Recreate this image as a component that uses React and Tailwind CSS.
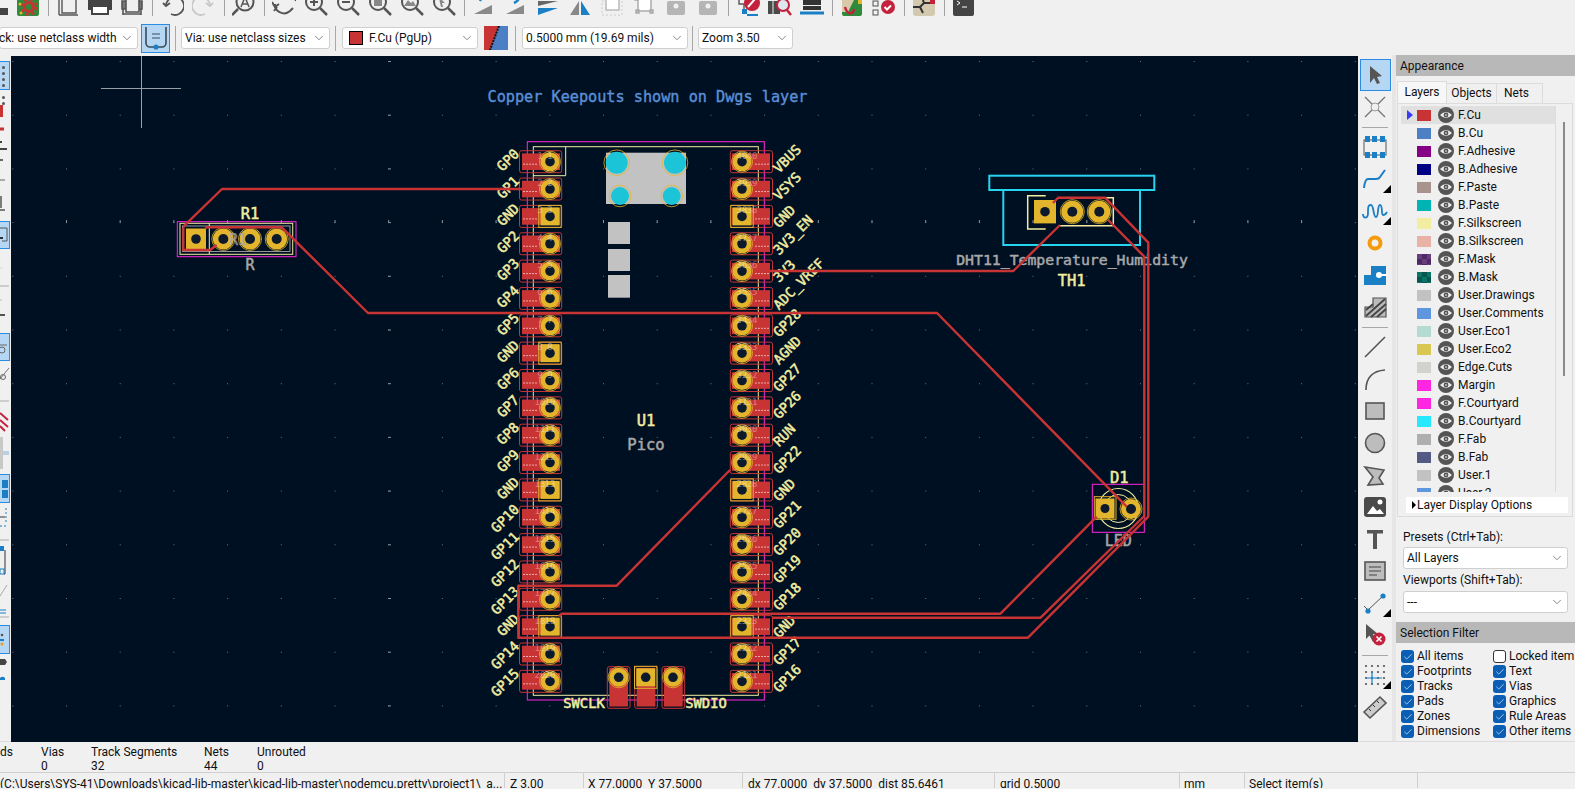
import React from 'react';
import { ChevronDown, Check } from 'lucide-react';

const RED = '#c83434';
const GOLD = '#e2b52c';
const SILK = '#f2eda1';
const COURT = '#ff26e2';
const GREY = '#a8a8a8';
const DARK = '#555555';
const BLUE = '#1a7fc4';

const rows = Array.from({ length: 20 }, (_, i) => 161.7 + i * 27.35);
const gridX = Array.from({ length: 24 }, (_, i) => 66 + i * 53.7);
const gridY = Array.from({ length: 13 }, (_, i) => 61 + i * 53.7);
const leftPins = ['GP0', 'GP1', 'GND', 'GP2', 'GP3', 'GP4', 'GP5', 'GND', 'GP6', 'GP7', 'GP8', 'GP9', 'GND', 'GP10', 'GP11', 'GP12', 'GP13', 'GND', 'GP14', 'GP15'];
const rightPins = ['VBUS', 'VSYS', 'GND', '3V3_EN', '3V3', 'ADC_VREF', 'GP28', 'AGND', 'GP27', 'GP26', 'RUN', 'GP22', 'GND', 'GP21', 'GP20', 'GP19', 'GP18', 'GND', 'GP17', 'GP16'];

const layers = [
    { name: 'F.Cu', cls: 'bg-[#c83434]' },
    { name: 'B.Cu', cls: 'bg-[#4d7fc4]' },
    { name: 'F.Adhesive', cls: 'bg-[#840084]' },
    { name: 'B.Adhesive', cls: 'bg-[#000084]' },
    { name: 'F.Paste', cls: 'bg-[#a9948d]' },
    { name: 'B.Paste', cls: 'bg-[#00b4b4]' },
    { name: 'F.Silkscreen', cls: 'bg-[#f2eda1]' },
    { name: 'B.Silkscreen', cls: 'bg-[#e8b2a7]' },
    { name: 'F.Mask', cls: 'bg-[conic-gradient(#4c2a63_25%,#6a3c7f_0_50%,#4c2a63_0_75%,#6a3c7f_0)] bg-[length:10px_10px]' },
    { name: 'B.Mask', cls: 'bg-[conic-gradient(#07574e_25%,#0b7466_0_50%,#07574e_0_75%,#0b7466_0)] bg-[length:10px_10px]' },
    { name: 'User.Drawings', cls: 'bg-[#c2c2c2]' },
    { name: 'User.Comments', cls: 'bg-[#5e97e0]' },
    { name: 'User.Eco1', cls: 'bg-[#b4dbd2]' },
    { name: 'User.Eco2', cls: 'bg-[#d8c852]' },
    { name: 'Edge.Cuts', cls: 'bg-[#d0d2cd]' },
    { name: 'Margin', cls: 'bg-[#ff26e2]' },
    { name: 'F.Courtyard', cls: 'bg-[#ff26e2]' },
    { name: 'B.Courtyard', cls: 'bg-[#26e9ff]' },
    { name: 'F.Fab', cls: 'bg-[#afafaf]' },
    { name: 'B.Fab', cls: 'bg-[#535b85]' },
    { name: 'User.1', cls: 'bg-[#c2c2c2]' },
    { name: 'User.2', cls: 'bg-[#5e97e0]' },
];

const filters = [
    ['All items', true, 'Locked items', false],
    ['Footprints', true, 'Text', true],
    ['Tracks', true, 'Vias', true],
    ['Pads', true, 'Graphics', true],
    ['Zones', true, 'Rule Areas', true],
    ['Dimensions', true, 'Other items', true],
];

// --- top toolbar ---

const Glass = ({ children }) => (
    <>
        <circle cx="10" cy="9" r="8" fill="none" stroke={DARK} strokeWidth="2" />
        <path d="M16 15l7 7" stroke={DARK} strokeWidth="2.5" />
        {children}
    </>
);

const topIcons = [
    <rect key="a" x="16" y="15" width="8" height="7" fill="#444" />,
    <g key="b"><rect x="1" y="1" width="22" height="22" rx="2" fill="#2f8a3b" /><circle cx="13" cy="14" r="4.5" fill="none" stroke={RED} strokeWidth="3" /><circle cx="13" cy="14" r="7.5" fill="none" stroke={RED} strokeWidth="2.5" strokeDasharray="3 3" /><circle cx="4" cy="11" r="1.5" fill={GOLD} /><circle cx="5" cy="20" r="1.5" fill={GOLD} /></g>,
    null,
    <g key="c" fill="none" stroke={DARK} strokeWidth="1.4"><path d="M6 2h14v18H6z" /><path d="M3 2v20M3 22h19" /></g>,
    <g key="d"><path d="M0 7h24v10h-4v-4H4v4H0z" fill="#444" /><path d="M4 13h16v8H4z" fill="#fff" stroke="#444" strokeWidth="2" /></g>,
    <g key="e" fill="none" stroke={DARK} strokeWidth="1.6"><path d="M2 8h20v8H2z" fill="#777" /><path d="M6 5h13v14H6z" fill="#f0f0f0" /><path d="M3 16v6M21 16v6M3 21h18" /></g>,
    null,
    <g key="f" fill="none" stroke={DARK} strokeWidth="1.8"><path d="M3 10l3 3 4-3" /><path d="M6 13a9 9 0 1 1 5 8" /></g>,
    <g key="g" fill="none" stroke="#c8c8c8" strokeWidth="1.8"><path d="M21 10l-3 3-4-3" /><path d="M18 13a9 9 0 1 0-5 8" /></g>,
    null,
    <g key="h" fill="none" stroke={DARK} strokeWidth="2"><circle cx="13" cy="9" r="8.5" /><path d="M6 16l-6 6" strokeWidth="2.5" /><path d="M9 14l4-10 4 10M10.5 11h5" strokeWidth="1.5" /></g>,
    null,
    <g key="i" fill="none" stroke={DARK} strokeWidth="2"><path d="M3 11a9 9 0 0 0 15 7l3-3" /><path d="M0 9l3 5 4-3M24 8a9 9 0 0 0-8-6" /><path d="M2 18l3-4" /></g>,
    <Glass key="j"><path d="M6 9h8M10 5v8" stroke={DARK} strokeWidth="2" /></Glass>,
    <Glass key="k"><path d="M6 9h8" stroke={DARK} strokeWidth="2" /></Glass>,
    <Glass key="l"><rect x="6" y="5" width="8" height="8" fill="#888" /></Glass>,
    <Glass key="m"><path d="M4 13l4-6 3 3 2-2 3 5z" fill="#888" /></Glass>,
    <Glass key="n"><path d="M7 4l6 6-3 0 1 4-2 0-1-4z" fill="#888" /></Glass>,
    null,
    <g key="o"><path d="M2 21l18-9v9z" fill="#8a8a8a" /><path d="M8 8a12 12 0 0 1 7-7" stroke={BLUE} strokeWidth="2.5" fill="none" /></g>,
    <g key="p"><path d="M2 21l18-9v9z" fill="#8a8a8a" /><path d="M10 10a10 10 0 0 0 6-8" stroke={BLUE} strokeWidth="2.5" fill="none" /></g>,
    <g key="q"><path d="M2 8h20L2 13z" fill="#666" /><path d="M2 15h20L2 22z" fill={BLUE} /></g>,
    <g key="r"><path d="M11 8v14H2z" fill="#888" /><path d="M13 8v14h9z" fill={BLUE} /></g>,
    <g key="s" fill="none"><rect x="2" y="8" width="20" height="14" stroke="#ccc" strokeDasharray="2 2" /><rect x="6" y="6" width="13" height="11" fill="#fff" stroke="#bbb" strokeWidth="1.5" /></g>,
    <g key="t" fill="none" stroke="#aaa" strokeWidth="1.5"><rect x="6" y="6" width="13" height="12" fill="#fff" /><rect x="3" y="4" width="3" height="3" fill="#bbb" /><rect x="18" y="17" width="3" height="3" fill="#bbb" /><rect x="4" y="17" width="3" height="3" fill="#bbb" /></g>,
    <g key="u"><rect x="3" y="8" width="18" height="14" rx="2" fill="#b5b5b5" /><circle cx="12" cy="13" r="2.5" fill="#f0f0f0" /></g>,
    <g key="v"><rect x="3" y="8" width="18" height="14" rx="2" fill="#b5b5b5" /><circle cx="12" cy="13" r="2.5" fill="#f0f0f0" /></g>,
    null,
    <g key="w"><path d="M3 5v6h5v5" fill="none" stroke={DARK} strokeWidth="1.4" /><rect x="6" y="16" width="5" height="5" fill={BLUE} /><path d="M11 22h11" stroke={BLUE} strokeWidth="2" /><circle cx="16" cy="10" r="8" fill="#c4213c" /><path d="M12 14l7-8" stroke="#fff" strokeWidth="2" /></g>,
    <g key="x"><rect x="0" y="8" width="12" height="13" fill="#4a4a4a" /><path d="M5 8v13" stroke="#eee" /><circle cx="15" cy="12" r="6" fill="#dfe7ee" stroke="#c4213c" strokeWidth="2" /><path d="M19 17l4 5" stroke="#c4213c" strokeWidth="2.5" /></g>,
    <g key="y"><path d="M3 7h18v5H3zM3 13h18v4H3z" fill="#333" /><path d="M0 20h24" stroke={BLUE} strokeWidth="3" /></g>,
    null,
    <g key="z"><rect x="2" y="7" width="20" height="16" rx="2" fill="#2f8a3b" /><path d="M2 7h12L8 19H2z" fill="#d8c9a8" /><path d="M5 14c2 8 8 8 9 2" fill="none" stroke="#c4213c" strokeWidth="2.4" /><rect x="18" y="7" width="4" height="4" fill={GOLD} /></g>,
    <g key="aa"><rect x="1" y="8" width="5" height="5" fill="none" stroke={DARK} /><rect x="1" y="17" width="5" height="5" fill="none" stroke={DARK} /><circle cx="16" cy="14" r="7" fill="#c4213c" /><path d="M12.5 14l2.5 2.5 4-4" fill="none" stroke="#fff" strokeWidth="2" /></g>,
    null,
    <g key="ab"><rect x="1" y="0" width="22" height="23" rx="3" fill="#d3c9ae" /><path d="M1 14h7l4-4 7 0M8 14l3 6M12 10l-2-6" stroke="#333" strokeWidth="2" fill="none" /><rect x="18" y="6" width="5" height="5" fill="#c4213c" /></g>,
    null,
    <g key="ac"><rect x="1" y="1" width="21" height="22" rx="2" fill="#444" /><path d="M5 8l3 2-3 2" stroke="#fff" fill="none" /><path d="M10 14h5" stroke="#fff" /></g>,
];

const TopBar = () => (
    <div className="flex items-start h-[23px] overflow-hidden -ml-[20px]">
        {topIcons.map((icon, i) => icon === null ? (
            <div key={i} className="w-[8px] h-[16px] flex justify-center shrink-0"><div className="w-px h-full bg-[#a0a0a0]" /></div>
        ) : (
            <div key={i} className="w-[32px] flex justify-center shrink-0">
                <svg width="24" height="24" viewBox="0 0 24 24" className="-mt-[7px]">{icon}</svg>
            </div>
        ))}
    </div>
);

const Sel = ({ className, children, textClass = '' }) => (
    <div className={`h-[22px] bg-white border border-[#cfcfcf] rounded-[3px] flex items-center justify-between shrink-0 ${className}`}>
        <div className={`flex items-center whitespace-nowrap ${textClass}`}>{children}</div>
        <ChevronDown size={14} strokeWidth={1} className="text-[#333] mr-[3px] shrink-0" />
    </div>
);

const VSep = ({ className }) => <div className={`w-px h-[25px] bg-[#a8a8a8] shrink-0 ${className}`} />;

const SecondBar = () => (
    <div className="flex items-center h-[30px] mb-[2px] shrink-0">
        <Sel className="w-[139px] -ml-px">
            <span className="-ml-[1px]">ck: use netclass width</span>
        </Sel>
        <div className="ml-[3px] w-[29px] h-[29px] bg-[#b5d7f3] border border-[#2a8be0] flex items-center justify-center shrink-0">
            <svg width="24" height="26" viewBox="0 0 24 26"><path d="M2 2v16a4 4 0 0 0 4 4h12a4 4 0 0 0 4-4V2" fill="none" stroke="#3a4a55" strokeWidth="1.6" /><path d="M8 9h8M8 13h8" stroke="#3a4a55" /><circle cx="12" cy="22" r="2.6" fill={BLUE} /></svg>
        </div>
        <VSep className="ml-[5px]" />
        <Sel className="w-[149px] ml-[5px]" textClass="pl-[3px]">Via: use netclass sizes</Sel>
        <VSep className="ml-[5px]" />
        <Sel className="w-[136px] ml-[6px]" textClass="pl-[6px]">
            <span className="w-[14px] h-[14px] bg-[#c83434] border border-black mr-[6px]" />F.Cu (PgUp)
        </Sel>
        <svg width="24" height="24" viewBox="0 0 24 24" className="ml-[6px] shrink-0"><path d="M0 0h15L6 24H0z" fill={RED} /><path d="M15 0h9v24H6z" fill="#4d7fc4" /><path d="M15 0L6 24" stroke="#111" strokeWidth="2" strokeDasharray="2 1" /></svg>
        <VSep className="ml-[7px]" />
        <Sel className="w-[166px] ml-[6px]" textClass="pl-[3px]">0.5000 mm (19.69 mils)</Sel>
        <VSep className="ml-[4px]" />
        <Sel className="w-[95px] ml-[5px]" textClass="pl-[3px]">Zoom 3.50</Sel>
    </div>
);

// --- left strip, only the right edge of the toolbar is on screen ---

const Dots = ({ n = 4 }) => (
    <div className="flex flex-col items-center gap-[3px] w-[6px] pt-[2px]">
        {Array.from({ length: n }).map((_, i) => <div key={i} className="w-[3px] h-[3px] rounded-full bg-[#555]" />)}
    </div>
);

const hl = 'bg-[#b5d7f3] border border-l-0 border-[#2a8be0] flex items-center';

const LeftStrip = () => (
    <div className="w-[11px] shrink-0 flex flex-col pt-[6px] overflow-hidden">
        <div className={`h-[29px] w-[10px] ${hl}`}><Dots /></div>
        <div className="h-[30px] pt-[4px]"><Dots n={2} /><div className="w-[3px] h-[12px] bg-[#c83434]" /></div>
        <svg width="10" height="32" viewBox="0 0 10 32" className="shrink-0"><path d="M0 9h4" stroke={RED} strokeWidth="3" /><path d="M0 22h2M0 29h7" stroke="#444" strokeWidth="2" /></svg>
        <svg width="10" height="69" viewBox="0 0 10 69" className="shrink-0"><path d="M0 8h3" stroke="#666" strokeWidth="2" /><path d="M0 28h5" stroke="#666" /><path d="M1 44v12M0 58h5" stroke="#555" strokeWidth="1.5" /></svg>
        <div className={`h-[28px] w-[10px] ${hl}`}><svg width="8" height="20" viewBox="0 0 8 20"><path d="M0 3h7v13H2" fill="none" stroke="#555" /><path d="M0 13h3" stroke="#333" strokeWidth="2" /></svg></div>
        <svg width="10" height="84" viewBox="0 0 10 84" className="shrink-0"><path d="M0 19h3" stroke="#ddd" /><path d="M0 37h9" stroke="#aaa" /><path d="M0 51h2" stroke="#bbb" /><path d="M0 66h5" stroke="#555" strokeWidth="2" /></svg>
        <div className={`h-[28px] w-[10px] ${hl}`}><svg width="8" height="20" viewBox="0 0 8 20"><path d="M0 8h7" stroke="#666" /><circle cx="2" cy="13" r="3" fill="none" stroke="#666" /></svg></div>
        <svg width="10" height="38" viewBox="0 0 10 38" className="shrink-0"><path d="M0 18L9 7" stroke="#777" /><circle cx="3" cy="16" r="2.5" fill="none" stroke="#666" /></svg>
        <svg width="10" height="10" viewBox="0 0 10 10" className="shrink-0"><path d="M0 2h9" stroke="#aaa" /></svg>
        <svg width="10" height="24" viewBox="0 0 10 24" className="shrink-0"><path d="M0 4l8 7M0 11l8 7M0 17l5 5" stroke="#c4213c" strokeWidth="2" fill="none" /></svg>
        <svg width="10" height="41" viewBox="0 0 10 41" className="shrink-0"><path d="M0 4h3v32H0z" fill="#c8c8c8" /><path d="M3 18h6v4H3z" fill="#b9cfe3" /></svg>
        <div className={`h-[29px] w-[10px] ${hl} flex-col justify-center gap-[2px]`}><div className="w-[6px] h-[8px] bg-[#1a7fc4]" /><div className="w-[6px] h-[8px] bg-[#1a7fc4]" /></div>
        <svg width="10" height="35" viewBox="0 0 10 35" className="shrink-0"><path d="M6 5v16" stroke={BLUE} strokeDasharray="2 2" /><path d="M0 14h5" stroke="#333" /><path d="M0 23h6" stroke={BLUE} strokeDasharray="2 2" /></svg>
        <svg width="10" height="78" viewBox="0 0 10 78" className="shrink-0"><path d="M0 2h9" stroke="#aaa" /><path d="M0 12h3M5 12v24h-1" stroke="#333" fill="none" /><rect x="0" y="8" width="4" height="5" fill={BLUE} /><rect x="0" y="31" width="4" height="5" fill="none" stroke={BLUE} /><path d="M0 58L7 47" stroke="#aaa" /><path d="M0 72h6M0 75h6" stroke={BLUE} /></svg>
        <svg width="10" height="9" viewBox="0 0 10 9" className="shrink-0"><path d="M0 1h9" stroke="#aaa" /></svg>
        <div className={`h-[29px] w-[10px] ${hl}`}><svg width="6" height="14" viewBox="0 0 6 14"><circle cx="2" cy="2" r="1.3" fill="#555" /><path d="M0 7h4" stroke={BLUE} strokeWidth="2" /><circle cx="2" cy="11" r="1.5" fill="#ef9a10" /></svg></div>
        <svg width="10" height="30" viewBox="0 0 10 30" className="shrink-0"><path d="M0 5h5l2 3-2 3H0z" fill="#444" /><path d="M0 24a3 3 0 0 1 5 0v2H0z" fill={BLUE} /></svg>
    </div>
);

// --- board ---

const T = ({ x, y, s = 14, c = SILK, sw = 0.5, rot, a = 'middle', children, o }) => (
    <text x={x} y={y} fontSize={s} fill={c} stroke={c} strokeWidth={sw} textAnchor={a} opacity={o}
        transform={rot ? `rotate(${rot} ${x} ${y})` : undefined}>{children}</text>
);

const Via = ({ x, y, r = 9.5, hole = 4.8 }) => (
    <g>
        <circle cx={x} cy={y} r={r + 1} fill="none" stroke={GOLD} strokeWidth="0.8" />
        <circle cx={x} cy={y} r={r} fill={GOLD} />
        <circle cx={x} cy={y} r={hole} fill="#0c1a2c" />
    </g>
);

const Square = ({ x, y, w = 10.5, h = 9, hole = 4.8, box = true }) => (
    <g>
        {box && <rect x={x - w - 0.7} y={y - h - 2} width={2 * w + 1.4} height={2 * h + 4} fill="none" stroke={GOLD} strokeWidth="1" />}
        <rect x={x - w + 1} y={y - h} width={2 * w - 2} height={2 * h} fill={GOLD} />
        <circle cx={x} cy={y} r={hole} fill="#0c1a2c" />
    </g>
);

const Pin = ({ y, side, num, gnd }) => {
    const left = side === 'L';
    const mx = (v) => (left ? v : 1292 - v);
    const pad = left ? 522 : 732;
    const box = left ? 519.5 : 730.3;
    return (
        <g>
            <rect x={pad} y={y - 8.3} width={38} height={16.6} fill={RED} />
            <rect x={box} y={y - 11} width={42.2} height={22} rx={2} fill="none" stroke={RED} strokeWidth="1" />
            <path d={`M${mx(523)} ${y + 2.5}H${mx(537)}`} stroke="#f5c8c8" strokeWidth="1" strokeDasharray="2 1" opacity="0.8" />
            {gnd ? <Square x={mx(550)} y={y} /> : <Via x={mx(550)} y={y} />}
            <T x={mx(550)} y={y - 3} s={9} c="#ffffff" sw={0} o={0.45}>{num}</T>
            <T x={mx(540)} y={y - 3} s={9} c="#ffffff" sw={0} o={0.35}>{num}</T>
        </g>
    );
};

const Board = () => (
    <svg viewBox="11 56 1347 686" width="1347" height="686" className="block font-['DejaVu_Sans_Mono',monospace]">
        <defs>
            <pattern id="grid" x="66" y="61" width="53.7" height="53.7" patternUnits="userSpaceOnUse">
                <rect width="1" height="1" fill="#6a7480" />
            </pattern>
        </defs>
        <rect x="11" y="56" width="1347" height="686" fill="#001023" />
        <rect x="11" y="56" width="1347" height="686" fill="url(#grid)" />
        {gridY.map((y) => <path key={y} d={`M388 ${y + 0.5}h3`} stroke="#8a929c" />)}
        {gridX.map((x) => <path key={x} d={`M${x + 0.5} 220v3`} stroke="#8a929c" />)}

        <path d="M141.5 56v72M101 88.5h80" stroke="#9a9fa5" strokeWidth="1" fill="none" />
        <T x={647.5} y={102} s={15.2} c="#5b8fd6" sw={0.4}>Copper Keepouts shown on Dwgs layer</T>

        {/* pico module */}
        <rect x="527.3" y="141.7" width="237" height="558.3" fill="none" stroke={COURT} strokeWidth="1" />
        <rect x="533.3" y="146.7" width="225" height="548.6" fill="none" stroke={SILK} strokeWidth="1" />
        <path d="M533 175.7h32.7v-29" fill="none" stroke={SILK} strokeWidth="1" />
        <rect x="606" y="152.7" width="80" height="51.3" fill="#c2c2c2" />
        {[[616.7, 162.7, 11], [675, 162.7, 11], [620, 196, 9], [671.7, 196, 9]].map(([x, y, r], i) => (
            <g key={i}>
                <circle cx={x} cy={y} r={r} fill="#1cc4d8" />
                <circle cx={x} cy={y} r={r + 1.8} fill="none" stroke={GOLD} strokeWidth="0.8" />
            </g>
        ))}
        <rect x="608" y="222" width="22" height="22" fill="#c2c2c2" />
        <rect x="608" y="249" width="22" height="22" fill="#c2c2c2" />
        <rect x="608" y="275" width="22" height="22.7" fill="#c2c2c2" />

        {rows.map((y, i) => <Pin key={i} y={y} side="L" num={i + 1} gnd={leftPins[i] === 'GND'} />)}
        {rows.map((y, i) => <Pin key={i} y={y} side="R" num={40 - i} gnd={rightPins[i] === 'GND'} />)}
        {rows.map((y, i) => <T key={i} x={520} y={y - 7} s={13.6} a="end" rot={-45}>{leftPins[i]}</T>)}
        {rows.map((y, i) => <T key={i} x={779} y={y + 12} s={13.6} a="start" rot={-45}>{rightPins[i]}</T>)}

        {/* debug pads */}
        {[609.3, 636.7, 664].map((x, i) => (
            <g key={i}>
                <rect x={x} y="668" width="18.7" height="38.5" fill={RED} />
                <rect x={x - 2} y="666.7" width="22.7" height="41.6" rx="2" fill="none" stroke={RED} />
            </g>
        ))}
        <Via x={618.7} y={677.3} />
        <Square x={645.7} y={677.3} box={true} />
        <Via x={673} y={677.3} />
        <T x={584} y={708} s={13.8}>SWCLK</T>
        <T x={706} y={708} s={13.8}>SWDIO</T>
        <T x={646} y={426} s={15.5}>U1</T>
        <T x={646} y={450} s={15.5} c={GREY}>Pico</T>

        {/* R1 */}
        <rect x="177.3" y="221.7" width="118.7" height="35" fill="none" stroke={COURT} />
        <rect x="180" y="223.3" width="112.7" height="31" fill="none" stroke={SILK} />
        <rect x="182.5" y="226" width="107.5" height="25.5" fill="none" stroke="#b8b8b8" strokeWidth="0.8" />
        <path d="M209.3 223v31" stroke={SILK} />
        <Square x={196} y={239} w={11} h={10.5} box={false} />
        <Via x={223.3} y={239} r={10.5} hole={5} />
        <Via x={250} y={239} r={10.5} hole={5} />
        <Via x={276.7} y={239} r={10.5} hole={5} />
        <T x={238} y={245} s={15} c={GREY} o={0.8}>R1</T>
        <T x={250} y={218.5} s={15.5}>R1</T>
        <T x={250} y={270} s={15} c={GREY}>R</T>

        {/* DHT11 */}
        <rect x="989.3" y="175.7" width="165" height="14.3" fill="none" stroke="#26d4f0" strokeWidth="2" />
        <path d="M1003.3 190v55h136.7v-55" fill="none" stroke="#26d4f0" strokeWidth="2" />
        <path d="M1045.7 195.7h-18v33.3h18M1060 225.7h53.3v-28h-8" fill="none" stroke={SILK} strokeWidth="1.5" />
        <Square x={1045} y={211.7} w={12} h={11.7} box={false} />
        <Via x={1072.3} y={211.7} r={11} hole={5} />
        <Via x={1099.3} y={211.7} r={11} hole={5} />
        <T x={1072} y={265} s={14.8} c={GREY}>DHT11_Temperature_Humidity</T>
        <T x={1071.7} y={285.5} s={15.5}>TH1</T>

        {/* D1 */}
        <rect x="1092.3" y="484.3" width="52" height="48" fill="none" stroke={COURT} />
        <circle cx="1118.3" cy="508.5" r="20" fill="none" stroke={SILK} strokeWidth="1.2" />
        <circle cx="1118.3" cy="508.5" r="14" fill="none" stroke={SILK} strokeWidth="1" />
        <rect x="1094.3" y="496.7" width="21.7" height="22.6" fill="none" stroke={GOLD} />
        <Square x={1105} y={508.5} w={10.5} h={10} hole={4.5} box={false} />
        <Via x={1131} y={509} r={10} hole={5} />
        <T x={1119.3} y={482.5} s={15.5}>D1</T>
        <T x={1118.3} y={545.5} s={15} c={GREY}>LED</T>

        {/* tracks */}
        <g fill="none" stroke={RED} strokeWidth="2.4" strokeLinejoin="round">
            <path d="M183.3 226.7L222 189H522" />
            <path d="M183.3 226.7V250H210L216.7 245" />
            <path d="M205 228L207 227.3H281.7L368 313H937L1126.7 506.7" />
            <path d="M730 470L616.7 585.7H518.3V637.7H1028L1148.3 516.7V242.7L1105 197.7H1058.3L1053 203" />
            <path d="M559 616L561.7 613.7H1000.5L1096.7 516.7" />
            <path d="M772 617.7H1040.6L1144.3 516V256.7L1108.3 220" />
            <path d="M770 271H1013.3L1060 225" />
        </g>
    </svg>
);

// --- right toolbar ---

const Tool = ({ active, tri, children }) => (
    <div className={`relative w-[31px] h-[32px] flex items-center justify-center ${active ? 'bg-[#b5d7f3] border border-[#2a8be0] h-[31px]' : ''}`}>
        <svg width="26" height="26" viewBox="0 0 26 26">{children}</svg>
        {tri && <div className="absolute right-0 bottom-[2px] w-0 h-0 border-l-[8px] border-l-transparent border-b-[8px] border-b-black" />}
    </div>
);

const ToolSep = () => <div className="h-[8px] flex items-center justify-center"><div className="w-[26px] h-px bg-[#a8a8a8]" /></div>;

const RightTools = () => (
    <div className="w-[34px] shrink-0 flex flex-col items-center pt-[4px]">
        <Tool active><path d="M8 4l0 17 4-5 3 6 3-1-3-6 5-1z" fill={DARK} /></Tool>
        <Tool><path d="M3 3l7 7M23 3l-7 7M3 23l7-7M23 23l-7-7" stroke="#777" strokeWidth="1.4" /><circle cx="13" cy="13" r="4" fill="#f0f0f0" stroke="#999" /></Tool>
        <ToolSep />
        <Tool>
            <rect x="2" y="6" width="22" height="15" fill="none" stroke="#555" />
            {[2, 9, 17].map((x) => <rect key={x} x={x + 1} y="2" width="5" height="6" fill={BLUE} />)}
            {[2, 9, 17].map((x) => <rect key={x} x={x + 1} y="18" width="5" height="6" fill={BLUE} />)}
        </Tool>
        <Tool tri><path d="M2 22q1-9 4-9h8q3 0 4-2l5-7" fill="none" stroke={BLUE} strokeWidth="2" /></Tool>
        <Tool tri><path d="M1 16c0 5 5 5 5-1s0-8 3-8 2 12 5 12 1-12 4-12 1 10 3 10 3-1 4-3" fill="none" stroke={BLUE} strokeWidth="1.8" /></Tool>
        <Tool><circle cx="13" cy="13" r="5.5" fill="none" stroke="#f59a0c" strokeWidth="4" /></Tool>
        <Tool><path d="M2 23V13h7V4h15v19z" fill={BLUE} /><circle cx="17" cy="13" r="3" fill="#fff" /><path d="M17 13h8" stroke="#fff" strokeWidth="2" /></Tool>
        <Tool><path d="M3 23V13h8V4h13v19z" fill="#bbb" stroke="#555" strokeWidth="1.2" /><path d="M4 22L23 5M9 23L24 10M15 23l9-8M4 16l7-6" stroke="#444" strokeWidth="1.8" /></Tool>
        <ToolSep />
        <Tool><path d="M3 23L23 3" stroke="#555" strokeWidth="1.6" /></Tool>
        <Tool><path d="M4 24C4 12 10 5 23 4" fill="none" stroke="#555" strokeWidth="1.6" /></Tool>
        <Tool><rect x="4" y="5" width="18" height="16" fill="#bdbdbd" stroke="#555" strokeWidth="1.6" /></Tool>
        <Tool><circle cx="13" cy="13" r="9.5" fill="#bdbdbd" stroke="#555" strokeWidth="1.6" /></Tool>
        <Tool><path d="M3 5l19 3-5 8 4 6-15 1 5-8z" fill="#bdbdbd" stroke="#555" strokeWidth="1.6" /></Tool>
        <Tool><rect x="2" y="3" width="22" height="20" rx="3" fill="#4a4a4a" /><circle cx="18" cy="8" r="2.5" fill="#fff" /><path d="M5 20l6-8 4 5 3-2 4 5z" fill="#fff" /></Tool>
        <Tool><path d="M5 4h16v3.5h-6V23h-4V7.5H5z" fill={DARK} /></Tool>
        <Tool><rect x="3" y="4" width="20" height="18" fill="#bdbdbd" stroke="#555" strokeWidth="1.6" /><path d="M7 9h12M7 13h12M7 17h8" stroke="#444" strokeWidth="1.2" /></Tool>
        <Tool tri><path d="M6 20L21 6" stroke="#555" /><circle cx="21" cy="6" r="2.6" fill={BLUE} /><circle cx="6" cy="21" r="2.6" fill={BLUE} /><path d="M2 16l3 3" stroke="#555" /></Tool>
        <Tool><path d="M4 2v15l3.5-3.5L11 20l3-2-3-6h5z" fill={DARK} /><circle cx="17" cy="17" r="6.5" fill="#c4213c" /><path d="M14.5 14.5l5 5M19.5 14.5l-5 5" stroke="#fff" strokeWidth="1.6" /></Tool>
        <ToolSep />
        <Tool tri>
            {[4, 10, 16, 22].map((x) => [4, 10, 16, 22].map((y) => <circle key={`${x}${y}`} cx={x} cy={y} r="1.1" fill="#555" />))}
            <path d="M10 10v12M4 16h16" stroke={BLUE} strokeWidth="1.2" />
        </Tool>
        <Tool><path d="M2 18L18 3l6 6L8 24z" fill="#ccc" stroke="#555" strokeWidth="1.6" /><path d="M7 15l2 2M11 11l2 2M15 7l2 2" stroke="#333" /></Tool>
    </div>
);

// --- appearance panel ---

const Eye = () => (
    <svg width="16" height="16" viewBox="0 0 16 16" className="shrink-0">
        <circle cx="8" cy="8" r="8" fill={DARK} />
        <path d="M2 8q6-6 12 0q-6 6-12 0z" fill="#eee" />
        <circle cx="8" cy="8" r="2.4" fill={DARK} />
        <circle cx="8" cy="8" r="1" fill="#bbb" />
    </svg>
);

const LayerRow = ({ layer, current }) => (
    <div className={`flex items-center h-[18px] ${current ? 'bg-[#e0e0e0]' : ''}`}>
        <div className="w-[16px] shrink-0 pl-[6px]">
            {current && <div className="w-0 h-0 border-y-[5px] border-y-transparent border-l-[6px] border-l-[#3a3aff]" />}
        </div>
        <div className={`w-[14px] h-[11px] shrink-0 ${layer.cls}`} />
        <div className="ml-[7px]"><Eye /></div>
        <span className="ml-[4px] whitespace-nowrap">{layer.name}</span>
    </div>
);

const Filter = ({ label, on }) => (
    <div className="flex items-center h-[15px] w-[92px] shrink-0">
        {on
            ? <div className="w-[13px] h-[13px] rounded-[3px] bg-[#0a5fb4] flex items-center justify-center shrink-0"><Check size={10} strokeWidth={1.5} className="text-white" /></div>
            : <div className="w-[13px] h-[13px] rounded-[3px] border border-[#333] bg-white shrink-0" />}
        <span className="ml-[3px] whitespace-nowrap">{label}</span>
    </div>
);

const Panel = () => (
    <div className="flex-1 min-w-0 flex flex-col overflow-hidden">
        <div className="h-[21px] bg-[#b8b8b8] pl-[4px] pt-px flex items-center shrink-0">Appearance</div>
        <div className="h-[27px] flex items-end pl-[1px] shrink-0">
            <div className="w-[50px] h-[22px] bg-[#f7f7f7] border border-b-0 border-[#dcdcdc] flex items-center justify-center pb-[1px]">Layers</div>
            <div className="w-[50px] h-[20px] border border-b-0 border-l-0 border-[#dcdcdc] flex items-center justify-center">Objects</div>
            <div className="w-[46px] h-[20px] border border-b-0 border-l-0 border-[#dcdcdc] flex items-center pl-[7px]">Nets</div>
        </div>
        <div className="ml-[1px] mr-[2px] h-[414px] border border-[#dcdcdc] flex flex-col shrink-0">
            <div className="flex h-[388px] pt-[2px] pl-[3px] shrink-0">
                <div className="w-[155px] overflow-hidden border-r border-[#dcdcdc] shrink-0">
                    {layers.map((l, i) => <LayerRow key={l.name} layer={l} current={i === 0} />)}
                </div>
                <div className="flex-1 flex justify-center pt-[16px]"><div className="w-[2px] h-[254px] bg-[#8a8a8a]" /></div>
            </div>
            <div className="mt-[5px] ml-[8px] w-[162px] h-[16px] bg-white flex items-center pl-[6px]">
                <div className="w-0 h-0 border-y-[4px] border-y-transparent border-l-[4px] border-l-black mr-[1px]" />
                Layer Display Options
            </div>
        </div>
        <div className="h-[105px] px-[7px] pt-[11px] shrink-0">
            <div className="h-[19px] flex items-center">Presets (Ctrl+Tab):</div>
            <Sel className="w-[165px]" textClass="pl-[3px]">All Layers</Sel>
            <div className="h-[22px] flex items-center">Viewports (Shift+Tab):</div>
            <Sel className="w-[165px]" textClass="pl-[3px]">---</Sel>
        </div>
        <div className="h-[21px] bg-[#b8b8b8] pl-[4px] pt-px flex items-center shrink-0">Selection Filter</div>
        <div className="pl-[5px] pt-[6px]">
            {filters.map(([a, aOn, b, bOn]) => (
                <div key={a} className="flex">
                    <Filter label={a} on={aOn} />
                    <Filter label={b} on={bOn} />
                </div>
            ))}
        </div>
    </div>
);

// --- bottom ---

const stats = [
    { w: 'w-[41px]', label: 'ds', value: '' },
    { w: 'w-[50px]', label: 'Vias', value: '0' },
    { w: 'w-[113px]', label: 'Track Segments', value: '32' },
    { w: 'w-[53px]', label: 'Nets', value: '44' },
    { w: 'w-[80px]', label: 'Unrouted', value: '0' },
];

const cells = [
    { w: 'w-[505px]', text: '(C:\\Users\\SYS-41\\Downloads\\kicad-lib-master\\kicad-lib-master\\nodemcu.pretty\\project1\\_a...' },
    { w: 'w-[79px]', text: 'Z 3.00', pad: 'pl-[5px]' },
    { w: 'w-[159px]', text: 'X 77.0000  Y 37.5000', pad: 'pl-[4px]' },
    { w: 'w-[252px]', text: 'dx 77.0000  dy 37.5000  dist 85.6461', pad: 'pl-[5px]' },
    { w: 'w-[185px]', text: 'grid 0.5000', pad: 'pl-[5px]' },
    { w: 'w-[65px]', text: 'mm', pad: 'pl-[4px]' },
    { w: 'w-[173px]', text: 'Select item(s)', pad: 'pl-[4px]' },
];

const App = () => {
    return (
        <div className="w-[1575px] h-[789px] bg-[#f0f0f0] text-[12px] leading-[15px] text-[#111] font-['Roboto',sans-serif] flex flex-col overflow-hidden">
            <TopBar />
            <SecondBar />
            <div className="flex h-[687px] shrink-0 border-b border-[#dcdcdc]">
                <LeftStrip />
                <div className="w-[1347px] pt-px shrink-0"><Board /></div>
                <RightTools />
                <div className="w-[4px] bg-[#e6e6e6] shrink-0" />
                <Panel />
            </div>
            <div className="h-[30px] flex pt-[3px] shrink-0">
                {stats.map((s) => (
                    <div key={s.label} className={`${s.w} shrink-0`}>
                        <div className="h-[14px] flex items-center">{s.label}</div>
                        <div className="h-[14px] flex items-center">{s.value}</div>
                    </div>
                ))}
            </div>
            <div className="h-[16px] flex border-t border-[#cfcfcf] shrink-0">
                {cells.map((c) => (
                    <div key={c.text} className={`${c.w} ${c.pad || ''} shrink-0 border-r border-[#cfcfcf] pt-[4px] whitespace-pre overflow-hidden`}>{c.text}</div>
                ))}
            </div>
        </div>
    );
};

export default App;
